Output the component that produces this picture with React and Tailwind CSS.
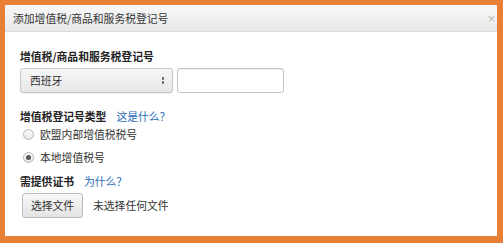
import React from "react";

function Radio({ checked, children }) {
  return (
    <label className="flex items-center gap-[6px] h-[20px] text-[10.8px] text-[#333]">
      <span className="w-[11px] h-[11px] rounded-full border border-[#b5b5b5] bg-gradient-to-b from-[#fdfdfd] to-[#e6e6e6] flex items-center justify-center">
        {checked && <span className="w-[5px] h-[5px] rounded-full bg-[#555]" />}
      </span>
      {children}
    </label>
  );
}

export default function App() {
  return (
    <div
      className="w-[503px] h-[243px] bg-[#e97f34] pl-[5px] pt-[5px] pr-[6px] pb-[7px]"
      style={{ fontFamily: '"Noto Sans CJK SC", "Liberation Sans", sans-serif' }}
    >
      <div className="w-full h-full bg-white flex flex-col">
        {/* header */}
        <div className="h-[27px] flex items-center justify-between pl-[8px] pr-[1px] bg-gradient-to-b from-[#f8f8f8] to-[#e9e9e9] border-b border-[#dcdcdc]">
          <span className="text-[10.8px] text-[#333]">添加增值税/商品和服务税登记号</span>
          <span className="text-[9px] text-[#999] leading-none">×</span>
        </div>

        <div className="pl-[15px] pt-[16px] flex flex-col">
          <div className="text-[10.8px] font-bold text-[#222] leading-[16px]">增值税/商品和服务税登记号</div>
          <div className="flex gap-[4px] mt-[4px]">
            <div className="w-[153px] h-[25px] rounded-[3px] border border-[#c8c8c8] bg-gradient-to-b from-[#f7f7f7] to-[#e7e7e7] shadow-[0_1px_1px_rgba(0,0,0,0.08)] flex items-center justify-between pl-[9px] pr-[8px]">
              <span className="text-[10.8px] text-[#333]">西班牙</span>
              <span className="flex flex-col items-center gap-[1px]">
                <span className="w-[2px] h-[3px] bg-[#777]" />
                <span className="w-[2px] h-[3px] bg-[#777]" />
              </span>
            </div>
            <div className="w-[107px] h-[25px] rounded-[3px] border border-[#c4c4c4] bg-white shadow-[inset_0_1px_1px_rgba(0,0,0,0.06)]" />
          </div>

          <div className="flex items-center gap-[10px] mt-[15px] leading-[16px]">
            <span className="text-[10.8px] font-bold text-[#222]">增值税登记号类型</span>
            <span className="text-[10.8px] text-[#2a6bb8]">这是什么？</span>
          </div>
          <div className="flex flex-col pl-[3px] gap-[3px]">
            <Radio>欧盟内部增值税税号</Radio>
            <Radio checked>本地增值税号</Radio>
          </div>

          <div className="flex items-center gap-[10px] mt-[6px] leading-[16px]">
            <span className="text-[10.8px] font-bold text-[#222]">需提供证书</span>
            <span className="text-[10.8px] text-[#2a6bb8]">为什么？</span>
          </div>
          <div className="flex items-center gap-[10px] mt-[4px] pl-[2px]">
            <div className="h-[25px] w-[61px] rounded-[3px] border border-[#bcbcbc] bg-gradient-to-b from-[#f8f8f8] to-[#e4e4e4] flex items-center justify-center text-[10.8px] text-[#333]">
              选择文件
            </div>
            <span className="text-[10.8px] text-[#333]">未选择任何文件</span>
          </div>
        </div>
      </div>
    </div>
  );
}
